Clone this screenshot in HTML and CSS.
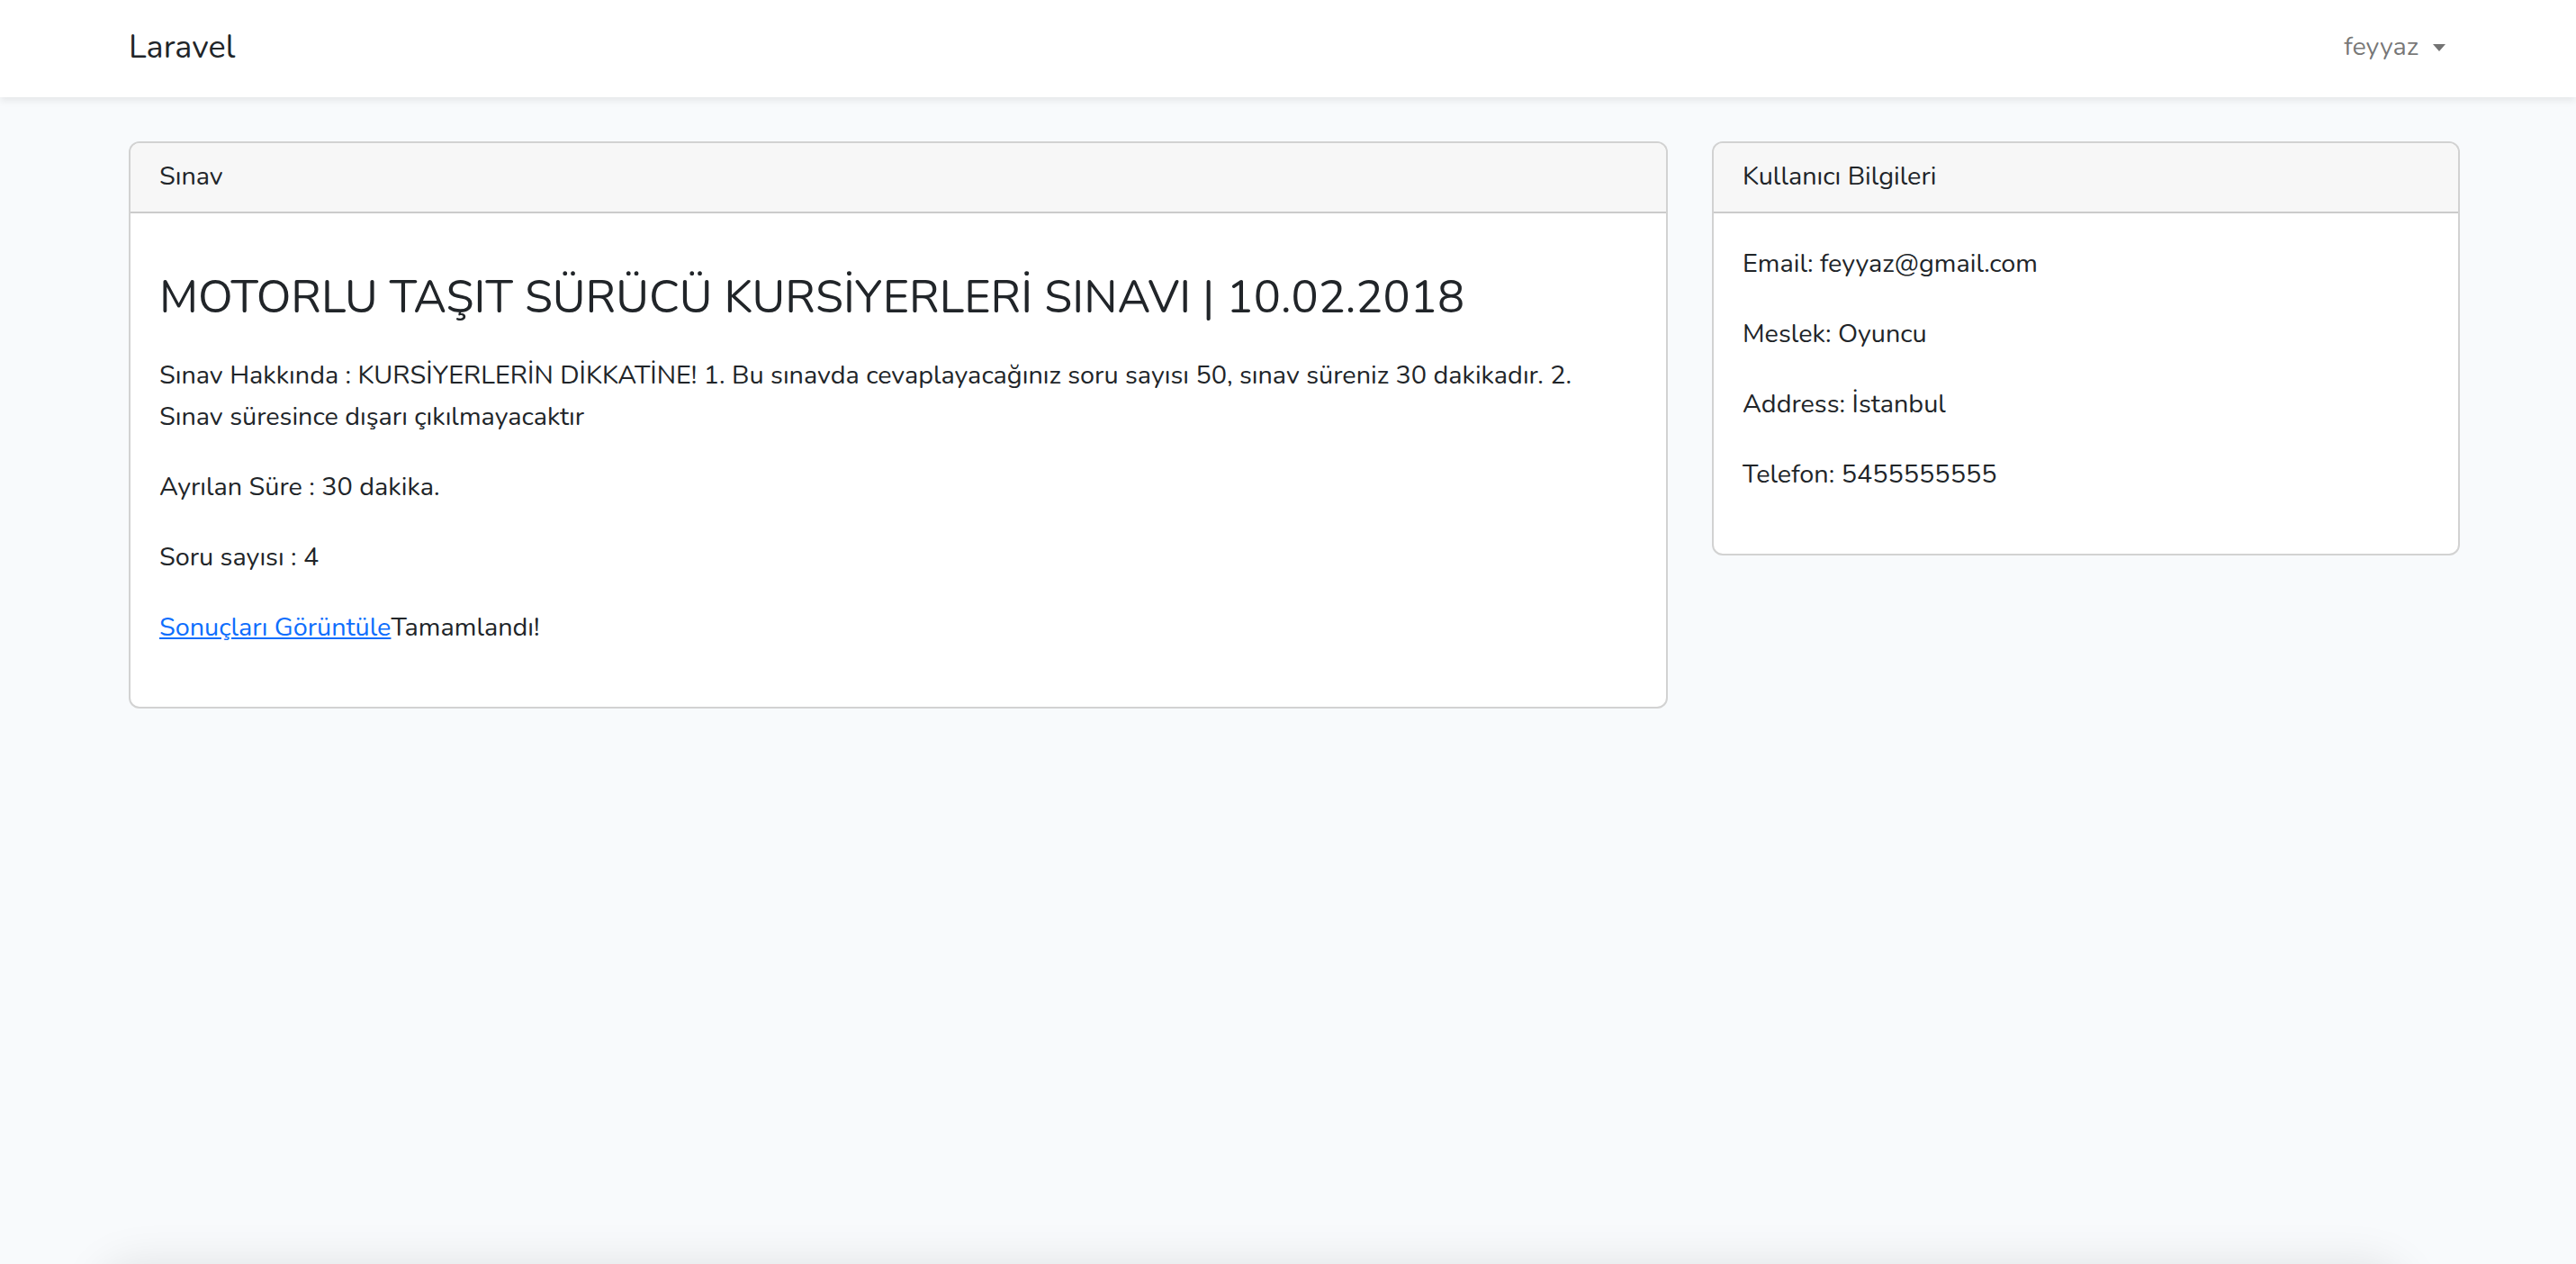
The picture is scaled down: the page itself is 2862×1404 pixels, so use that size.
FILE: index.html
```html
<!DOCTYPE html>
<html lang="tr">
<head>
<meta charset="utf-8">
<title>Laravel</title>
<link rel="stylesheet" href="styles.css">
</head>
<body>
<nav class="navbar">
  <div class="container nav-inner">
    <a class="brand" href="#">Laravel</a>
    <a class="nav-link" href="#">feyyaz<span class="caret"></span></a>
  </div>
</nav>
<main class="main">
  <div class="container row">
    <section class="card">
      <div class="card-header">Sınav</div>
      <div class="card-body">
        <h3 class="title">MOTORLU TAŞIT SÜRÜCÜ KURSİYERLERİ SINAVI | 10.02.2018</h3>
        <p>Sınav Hakkında : KURSİYERLERİN DİKKATİNE! 1. Bu sınavda cevaplayacağınız soru sayısı 50, sınav süreniz 30 dakikadır. 2. Sınav süresince dışarı çıkılmayacaktır</p>
        <p>Ayrılan Süre : 30 dakika.</p>
        <p>Soru sayısı : 4</p>
        <p><a class="link" href="#">Sonuçları Görüntüle</a>Tamamlandı!</p>
      </div>
    </section>
    <section class="card">
      <div class="card-header">Kullanıcı Bilgileri</div>
      <div class="card-body">
        <p>Email: feyyaz@gmail.com</p>
        <p>Meslek: Oyuncu</p>
        <p>Address: İstanbul</p>
        <p>Telefon: 5455555555</p>
      </div>
    </section>
  </div>
</main>
<div class="bottom-shade"></div>
</body>
</html>
```
FILE: styles.css
```css
* { box-sizing: border-box; }
html, body { margin: 0; padding: 0; }
body {
  background: #f8fafc;
  font-family: "Nunito", "Lato", "Noto Sans", sans-serif;
  font-size: 28.8px;
  line-height: 46px;
  color: #212529;
  min-height: 1404px;
  overflow: hidden;
}
.container {
  width: 2590px;
  margin-left: 143px;
}
.navbar {
  background: #fff;
  height: 108px;
  box-shadow: 0 4px 8px rgba(0, 0, 0, 0.075);
  position: relative;
  z-index: 1;
}
.nav-inner {
  height: 108px;
  display: flex;
  align-items: center;
  justify-content: space-between;
  padding-bottom: 3px;
}
.brand {
  font-size: 36px;
  line-height: 1.2;
  color: #212529;
  text-decoration: none;
}
.nav-link {
  font-size: 28.8px;
  line-height: 1.2;
  color: rgba(0, 0, 0, 0.55);
  text-decoration: none;
  padding-right: 16px;
  display: flex;
  align-items: center;
}
.caret {
  display: inline-block;
  width: 0;
  height: 0;
  margin-left: 16px;
  margin-top: 2px;
  border-top: 8px solid rgba(0, 0, 0, 0.55);
  border-left: 7.5px solid transparent;
  border-right: 7.5px solid transparent;
}
.main {
  padding-top: 49px;
}
.row {
  display: grid;
  grid-template-columns: 1710px 831px;
  column-gap: 49px;
  align-items: start;
}
.card {
  background: #fff;
  border: 2px solid rgba(0, 0, 0, 0.175);
  border-radius: 12px;
  overflow: hidden;
}
.card-header {
  background: #f7f7f7;
  border-bottom: 2px solid rgba(0, 0, 0, 0.175);
  padding: 14px 32px 16px;
  line-height: 46px;
}
.card-body {
  padding: 33px 32px 33px;
}
.card-body p {
  margin: 0 0 32px;
}
.title {
  font-size: 50.4px;
  font-weight: 400;
  line-height: 60px;
  margin: 31px 0 33px;
}
.link {
  color: #0d6efd;
  text-decoration: underline;
}
.bottom-shade {
  position: fixed;
  top: 1404px;
  left: 110px;
  right: 190px;
  height: 100px;
  border-radius: 40px;
  box-shadow: 0 0 50px rgba(0, 0, 0, 0.1);
}
```
